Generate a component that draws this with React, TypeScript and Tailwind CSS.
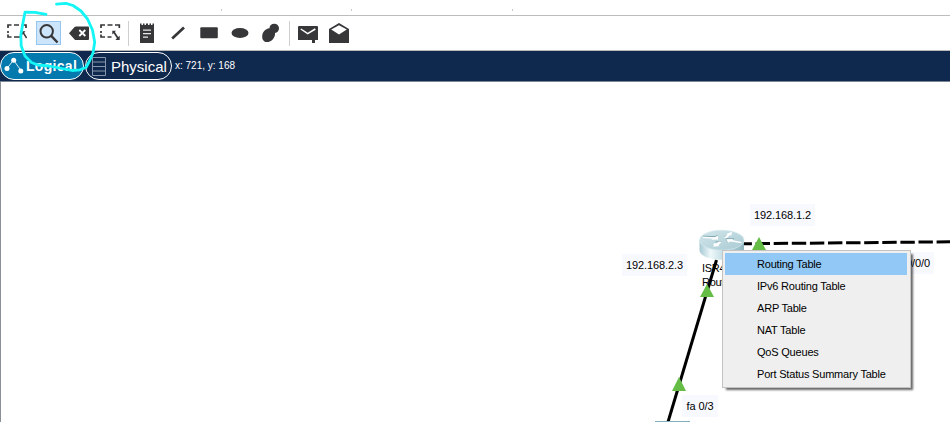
import type { ReactNode } from "react";

const INK = "#37373a";

function Tool({ x, label, active, children }: { x: number; label: string; active?: boolean; children: ReactNode }) {
  return (
    <button type="button" aria-label={label} className="h-[34px] w-[31px] shrink-0">
      <svg width="31" height="34" viewBox={`${x} 16 31 34`} className="block">
        {active && <rect x="36.5" y="21.5" width="24" height="23" fill="#cce5fb" stroke="#94c6f0" />}
        {children}
      </svg>
    </button>
  );
}

function Separator() {
  return (
    <div className="flex h-[34px] w-[6px] shrink-0 items-center pl-[2px]">
      <div className="h-[25px] w-px bg-[#cfcfcf]" />
    </div>
  );
}

function Toolbar() {
  return (
    <div className="flex h-[35px] border-b border-[#b9b9b9] bg-white pl-[2px]">
      <Tool x={2} label="Select">
        <path d="M8 28V25H11.5M14 25H19M21.5 25H26V28M8 31V33M8 34.5V37H11.5M14 37H20" fill="none" stroke={INK} strokeWidth="1.7" />
        <path d="M20.3 31.3H25.5L24.2 32.7L27.2 37.6L26 38.5L23 33.8L21.6 36Z" fill={INK} />
      </Tool>
      <Tool x={33} label="Inspect" active>
        <circle cx="46.7" cy="31.3" r="6.2" fill="none" stroke={INK} strokeWidth="2" />
        <path d="M51 35.7L57.5 42.5" stroke={INK} strokeWidth="2.4" />
      </Tool>
      <Tool x={64} label="Delete">
        <path d="M69 33.2L74.6 26.9Q75 26.4 76 26.4H88Q89 26.4 89 27.4V39Q89 40 88 40H76Q75 40 74.6 39.5Z" fill={INK} />
        <path d="M79.3 30L85.3 36M85.3 30L79.3 36" stroke="white" strokeWidth="1.8" />
      </Tool>
      <Tool x={95} label="Resize">
        <path d="M101 28V25H105M107.5 25H112.5M115 25H119.3V28M101 31V33M101 34.5V37H105M107.5 37H111.5" fill="none" stroke={INK} strokeWidth="1.7" />
        <path d="M112.3 30.7H116L114.9 31.9L118.2 37L119.7 35.8V40H115.5L116.9 38.3L113.6 33.3L112.3 34.4Z" fill={INK} />
      </Tool>
      <Separator />
      <Tool x={132} label="Place note">
        <path d="M140 23.5H141.5V25H143V23.5H144.5V25H146V23.5H148V25H149.5V23.5H151V25H152.5V23.5H154V43H140Z" fill={INK} />
        <path d="M143 30.2H151M143 33.7H151M143 37.2H148" stroke="#e9e9e9" strokeWidth="1.2" />
      </Tool>
      <Tool x={163} label="Draw line">
        <path d="M172.2 38.5L184 27.5" stroke={INK} strokeWidth="2.7" />
      </Tool>
      <Tool x={194} label="Draw rectangle">
        <rect x="200.3" y="27.2" width="17.5" height="11" rx="1" fill={INK} />
      </Tool>
      <Tool x={225} label="Draw ellipse">
        <ellipse cx="240" cy="33" rx="8.5" ry="4.9" fill={INK} />
      </Tool>
      <Tool x={256} label="Draw freeform">
        <path d="M269.5 28.3C269.5 25.5 271.5 23.8 274.2 23.8C277 23.8 279 25.7 279 28.3C279 30.8 277.3 32.6 275 33C275.6 37.5 271.5 42.1 267 42.1C264 42.1 262.2 40 262.2 36.8C262.2 32.3 265 28.9 269.5 28.3Z" fill={INK} />
      </Tool>
      <Separator />
      <Tool x={293} label="Add simple PDU">
        <path d="M299 26H317Q318 26 318 27V40H315V43H312V40H298V27Q298 26 299 26Z" fill={INK} />
        <path d="M300.8 29L307.7 33.6L315.3 29" fill="none" stroke="white" strokeWidth="1.5" />
      </Tool>
      <Tool x={324} label="Add complex PDU">
        <path d="M329 29L339 23L349 29V43H329Z" fill={INK} />
        <path d="M331.2 29.6L339 25.2L346.8 29.6L339 34.5Z" fill="white" />
      </Tool>
    </div>
  );
}

function ViewBar() {
  return (
    <div className="flex h-[31px] items-center border-b border-[#7c8592] bg-[#0f284d] text-white">
      <button type="button" className="flex h-[28px] w-[84px] shrink-0 items-center rounded-[14px] border border-white bg-[#0379ae] pl-[3px]">
        <svg width="21" height="20" viewBox="0 0 21 20" className="shrink-0">
          <path d="M3 12.5L9.5 4L17 14.5" fill="none" stroke="#d9edf7" strokeWidth="1" />
          <circle cx="3" cy="12.5" r="2.5" fill="white" />
          <circle cx="9.7" cy="4.2" r="2.5" fill="white" />
          <circle cx="16.8" cy="15" r="2.5" fill="white" />
        </svg>
        <span className="ml-[1px] text-[14px] leading-none font-bold tracking-[0.3px]">Logical</span>
      </button>
      <button type="button" className="ml-[1px] flex h-[28px] w-[87px] shrink-0 items-center rounded-[14px] border border-white bg-[#0f284d] pl-[6px]">
        <svg width="14" height="19" viewBox="0 0 14 19" className="shrink-0">
          <path d="M.5 .5H13.5V18.5H.5ZM.5 5H13.5M.5 9.5H13.5M.5 14H13.5" fill="none" stroke="#8897ad" />
        </svg>
        <span className="ml-[5px] pt-px text-[15px] leading-none">Physical</span>
      </button>
      <span className="ml-[3px] text-[10px] leading-none whitespace-pre">x: 721, y: 168</span>
    </div>
  );
}

function PortLabel({ place, children }: { place: string; children: ReactNode }) {
  return (
    <div className={`absolute flex items-center justify-center bg-[#f8f9ff] text-[11px] tracking-[-0.1px] whitespace-nowrap ${place}`}>{children}</div>
  );
}

function Router() {
  return (
    <svg className="absolute top-[147px] left-[699px]" width="46" height="32" viewBox="699 229 46 32">
      <defs>
        <linearGradient id="side" x1="0" x2="1">
          <stop offset="0" stopColor="#a6c8d2" />
          <stop offset=".25" stopColor="#eef8fa" />
          <stop offset=".6" stopColor="#b9d7df" />
          <stop offset="1" stopColor="#8fb5c0" />
        </linearGradient>
        <linearGradient id="lid" x1="0" y1="0" x2="1" y2="1">
          <stop offset="0" stopColor="#d2e6eb" />
          <stop offset="1" stopColor="#a9cad3" />
        </linearGradient>
      </defs>
      <path d="M699.5 240V250C700 263 744 263 744 250V240Z" fill="url(#side)" />
      <ellipse cx="721.8" cy="240.2" rx="22.2" ry="10" fill="url(#lid)" stroke="#d7eaef" strokeWidth=".7" />
      <path d="M703 236.2L715 236.6L717.5 235.4M724 237.4L729.5 235M728 242.6L726 238.6L734 238.8M721.5 241.6L715.5 242" fill="none" stroke="#7299a5" strokeWidth=".8" />
      <g fill="white">
        <path d="M703 236.7L715 237.2L717.8 235.8L718.2 239.4L711 239.8L713 238.8L703 237.9Z" />
        <path d="M723.6 237.8L727.5 234.9L726.3 234L732 231.7L731.4 235.6L729.8 235.3L726.6 238.2Z" />
        <path d="M741.5 243.2L730.5 241.6L728 242.8L726.2 239.2L733.5 239L732 240.1L741.5 242Z" />
        <path d="M721.8 241.8L718.4 245.3L719.6 246.2L713.2 246.6L714 242.9L715.8 243.5L719.2 241.6Z" />
      </g>
    </svg>
  );
}

const ENTRIES = ["Routing Table", "IPv6 Routing Table", "ARP Table", "NAT Table", "QoS Queues", "Port Status Summary Table"];

function InspectMenu() {
  return (
    <div className="absolute top-[168px] left-[722px] flex h-[138px] w-[189px] flex-col border border-[#c3c3c3] bg-[#efefef] py-[2px] pr-[3px] pl-[2px] shadow-[3px_3px_2px_-1px_rgba(0,0,0,0.6)]">
      {ENTRIES.map((entry, i) => (
        <div key={entry} className={`flex h-[22px] shrink-0 items-center pl-[32px] text-[11px] tracking-[-0.2px] whitespace-nowrap ${i === 0 ? "bg-[#91c8f6]" : ""}`}>
          {entry}
        </div>
      ))}
    </div>
  );
}

function Workspace() {
  return (
    <div className="relative h-[340px] overflow-hidden border-l border-[#8a8f98] bg-white">
      <div className="absolute top-0 left-[-1px] h-[340px] w-[950px]">
        <PortLabel place="left-[750px] top-[122px] h-[22px] w-[65px]">192.168.1.2</PortLabel>
        <PortLabel place="left-[622px] top-[172px] h-[22px] w-[65px]">192.168.2.3</PortLabel>
        <PortLabel place="left-[682px] top-[313px] h-[22px] w-[36px]">fa 0/3</PortLabel>
        <PortLabel place="left-[888px] top-[170px] h-[22px] w-[46px] pl-[14px]">0/0/0</PortLabel>
        <div className="absolute top-[179px] left-[702px] text-[11px] leading-[14px] tracking-[-0.3px]">
          <div>ISR4331</div>
          <div>Router0</div>
        </div>
        <svg className="absolute top-0 left-0" width="950" height="340" viewBox="0 82 950 340">
          <path d="M743 243.8L950 241.8" stroke="black" strokeWidth="3" strokeDasharray="14.4 3.7" strokeDashoffset="5.5" />
          <path d="M716.5 260L668 422" stroke="black" strokeWidth="3" />
          <g fill="#65bd45">
            <path d="M759 237L766 250H752Z" />
            <path d="M707 284L714 297H700Z" />
            <path d="M679 377L686 391H672Z" />
          </g>
          <path d="M655 421.5H690" stroke="#82aeb9" />
        </svg>
        <Router />
        <InspectMenu />
      </div>
    </div>
  );
}

export default function App() {
  return (
    <div className="relative flex h-[422px] w-[950px] flex-col overflow-hidden bg-white font-['Liberation_Sans',Arial,sans-serif] text-black">
      <div className="flex h-[16px] items-end border-b border-[#bdbdbd] pb-[4px] pl-[221px]">
        <div className="h-[2px] w-px bg-[#c8c8c8]" />
        <div className="ml-[129px] h-[2px] w-px bg-[#c8c8c8]" />
        <div className="ml-[160px] h-[2px] w-px bg-[#c8c8c8]" />
      </div>
      <Toolbar />
      <ViewBar />
      <Workspace />
      <svg className="pointer-events-none absolute top-0 left-0" width="110" height="84" viewBox="0 0 110 84">
        <path d="M46 14.3L35 12.3L25 12.2L23.5 20L20.8 35L21.2 46L25 56L31.5 62.5L38 65L49 66L62 68.5L72 70.5L80 69.8L86 67.5L89.5 61L93 53L94.7 42L92.5 30L87.5 19L81 11L73 5.5L66 3.3L56.5 4.2" fill="none" stroke="#14f5f5" strokeWidth="2.8" strokeLinecap="round" strokeLinejoin="round" />
      </svg>
    </div>
  );
}
